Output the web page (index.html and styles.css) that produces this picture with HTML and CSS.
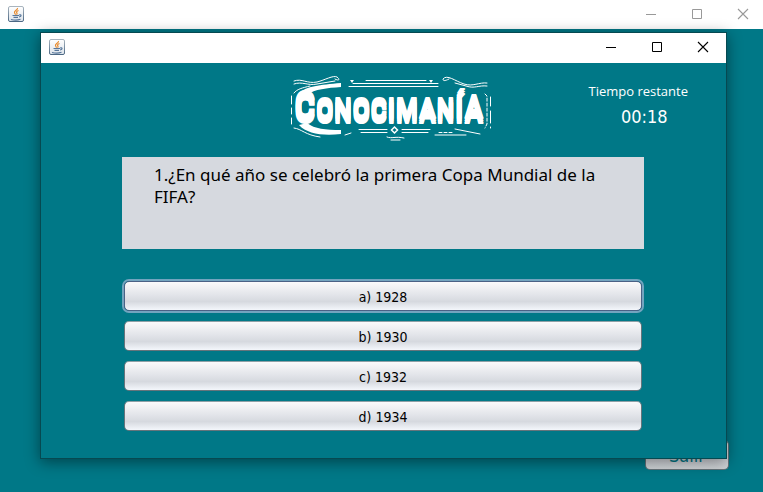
FILE: index.html
```
<!DOCTYPE html>
<html lang="es">
<head>
<meta charset="utf-8">
<title>Conocimanía</title>
<link rel="stylesheet" href="styles.css">
</head>
<body>
<svg class="defs" aria-hidden="true">
  <defs>
    <linearGradient id="tile" x1="0" y1="0" x2="0" y2="1">
      <stop offset="0" stop-color="#fff"/><stop offset="1" stop-color="#dce3ea"/>
    </linearGradient>
    <linearGradient id="edge" x1="0" y1="0" x2="0" y2="1">
      <stop offset="0" stop-color="#a9b5bf"/><stop offset="1" stop-color="#4c6884"/>
    </linearGradient>
    <symbol id="java" viewBox="0 0 16 16">
      <rect x=".5" y=".5" width="15" height="15" rx="1.5" fill="url(#tile)" stroke="url(#edge)"/>
      <path d="M9.5 2C10 4 6 4.500 6.500 6.500C6.700 7.500 7.500 8 7.500 8.700M10.500 4.500C8.500 5.500 8 6 9 7.200C9.300 7.700 9 8.200 8.500 8.700" fill="none" stroke="#e88a2c" stroke-width="1.200"/>
      <path d="M4.500 9.500H11M5.500 11.300H10M11 9C13.500 8 14 10.500 11 11M3 13.500C6 14.300 10 14.200 12.500 13.300" fill="none" stroke="#58779b" stroke-width="1.200"/>
    </symbol>
    <symbol id="min" viewBox="0 0 12 12"><path d="M1 6.500H11" fill="none" stroke="currentColor"/></symbol>
    <symbol id="max" viewBox="0 0 12 12"><path d="M1.500 1.500H10.500V10.500H1.500Z" fill="none" stroke="currentColor"/></symbol>
    <symbol id="close" viewBox="0 0 12 12"><path d="M1 1L11 11M11 1L1 11" fill="none" stroke="currentColor" stroke-width="1.100"/></symbol>
  </defs>
</svg>

<div class="window">
  <header class="titlebar titlebar-inactive">
    <svg class="app-icon"><use href="#java"/></svg>
    <div class="controls">
      <button type="button" aria-label="Minimizar"><svg><use href="#min"/></svg></button>
      <button type="button" aria-label="Maximizar"><svg><use href="#max"/></svg></button>
      <button type="button" aria-label="Cerrar"><svg><use href="#close"/></svg></button>
    </div>
  </header>
  <div class="backdrop"><button type="button" class="nimbus exit">Salir</button></div>
</div>

<section class="dialog" role="dialog" aria-label="Pregunta">
  <header class="titlebar">
    <svg class="app-icon"><use href="#java"/></svg>
    <div class="controls">
      <button type="button" aria-label="Minimizar"><svg><use href="#min"/></svg></button>
      <button type="button" aria-label="Maximizar"><svg><use href="#max"/></svg></button>
      <button type="button" aria-label="Cerrar"><svg><use href="#close"/></svg></button>
    </div>
  </header>
  <main>
    <div class="top">
      <svg class="logo" viewBox="0 0 204 66">
        <g fill="none" stroke="#fff" stroke-linecap="round">
          <path d="M5 6C13 3 18 9 28 7C36 5 44 0 48 2C52 5 49 6 46 4M5 9C13 6 19 11 28 9L46 6"/>
          <path d="M198 8C190 7 184 12 175 9C166 6 158 -1 154 4C154 7 158 5 160 4M198 11C189 10 186 14 177 11L166 8"/>
          <path d="M77 5.500H137M64 8.500H149M60 11.500H149"/>
          <path d="M70 54.500H98M72 57.500H98M113 54.500H141M113 57.500H139M98 62C103 64 106 61 115 63M102 65H111"/>
          <path d="M2.500 21V29M2.500 33V39M2.500 43V49M201.500 22V31M201.500 36V48M201.500 52V53"/>
          <path d="M5 53C13 54 16 60 31 62M5 18C8 14 13 13 21 11M146 60H177M166 54L191 59M56 60L62 58"/>
          <path d="M196 19L198 21V49L196 53M150 57.500H165" stroke-dasharray="3 2"/>
          <path d="M105.500 52L108.500 55L105.500 58L102.500 55Z" stroke-width="1.500"/>
        </g>
        <path fill="#fff" d="M10 18C18 11 30 10 52 8V12C38 13 26 14 18 20ZM10 50L18 48C26 54 36 55 52 55V59C34 61 18 59 10 50ZM61 5H65L63 8ZM140 5H144L142 8Z"/>
        <text class="wordmark" x="5" y="46"><tspan class="initial">C</tspan>ONOCIMAN<tspan class="final">ÍA</tspan></text>
      </svg>
      <div class="timer">
        <span>Tiempo restante</span>
        <time>00:18</time>
      </div>
    </div>
    <p class="question">1.¿En qué año se celebró la primera Copa Mundial de la FIFA?</p>
    <div class="answers">
      <button type="button" class="nimbus selected">a) 1928</button>
      <button type="button" class="nimbus">b) 1930</button>
      <button type="button" class="nimbus">c) 1932</button>
      <button type="button" class="nimbus">d) 1934</button>
    </div>
  </main>
</section>
</body>
</html>
```
FILE: styles.css
```
* { box-sizing: border-box; }
body {
  margin: 0;
  font-family: "DejaVu Sans Condensed", "Noto Sans", sans-serif;
  background: #007887;
}
.defs { position: absolute; width: 0; height: 0; }
.window { display: flex; flex-direction: column; min-height: 100vh; }
.titlebar {
  display: flex;
  align-items: center;
  justify-content: space-between;
  height: 30px;
  padding: 0 3px 2px 8px;
  background: #fff;
  color: #000;
}
.titlebar-inactive { height: 29px; padding-right: 0; color: #999; }
.app-icon { width: 16px; height: 16px; }
.controls { display: flex; gap: 6px; }
.controls button {
  display: grid;
  place-items: center;
  width: 40px;
  height: 26px;
  padding: 0;
  border: 0;
  background: none;
  color: inherit;
}
.controls svg { width: 12px; height: 12px; }
.backdrop {
  flex: 1;
  display: flex;
  align-items: flex-end;
  justify-content: flex-end;
  padding: 0 34px 22px;
}
.nimbus {
  height: 30px;
  border: 1px solid #66747b;
  border-top-color: #8fa0a6;
  border-radius: 5px;
  background: linear-gradient(#fafafb, #e3e5ea 45%, #d6d9df 70%, #f4f7fc);
  color: #000;
  font-family: inherit;
  font-size: 14px;
  line-height: 20px;
  padding: 4px 0 2px;
}
.nimbus.exit {
  width: 84px;
  background: linear-gradient(#eee, #d6d9df 60%, #cfd3d6);
  color: #007887;
  font-size: 18px;
}
.dialog {
  position: absolute;
  inset: 32px 36px 33px 40px;
  border: 1px solid #064951;
  background: #007887;
  box-shadow: 0 3px 14px rgba(0, 0, 0, 0.45);
}
.top {
  display: grid;
  grid-template-columns: 1fr 204px 1fr;
  height: 94px;
  padding: 12px 0 0 14px;
}
.logo { grid-column: 2; width: 204px; height: 66px; }
.wordmark {
  font-family: "Roboto Condensed", Roboto, sans-serif;
  font-size: 30px;
  font-weight: 700;
  fill: #fff;
  text-shadow: 0 -3px #fff, 0 -2px #fff, 0 2px #fff, 0 3px #fff;
}
.initial { font-size: 38px; }
.final { font-size: 33px; }
.timer {
  justify-self: end;
  padding: 6px 38px 0 0;
  color: #fff;
  font-family: "Open Sans", sans-serif;
  font-size: 13px;
  line-height: 20px;
  text-align: center;
}
.timer time {
  display: block;
  padding: 4px 0 0 12px;
  font-family: "DejaVu Sans Condensed", sans-serif;
  font-size: 18px;
  line-height: 24px;
}
.question {
  height: 92px;
  margin: 0 82px 0 81px;
  padding: 7px 32px;
  background: #d6d9df;
  font-family: "Noto Sans", sans-serif;
  font-size: 17px;
  line-height: 22px;
}
.answers {
  display: grid;
  gap: 10px;
  padding: 32px 84px 0 83px;
}
.selected {
  border-color: #4a6185;
  box-shadow: 0 0 0 2px #73a4bf;
}
```
